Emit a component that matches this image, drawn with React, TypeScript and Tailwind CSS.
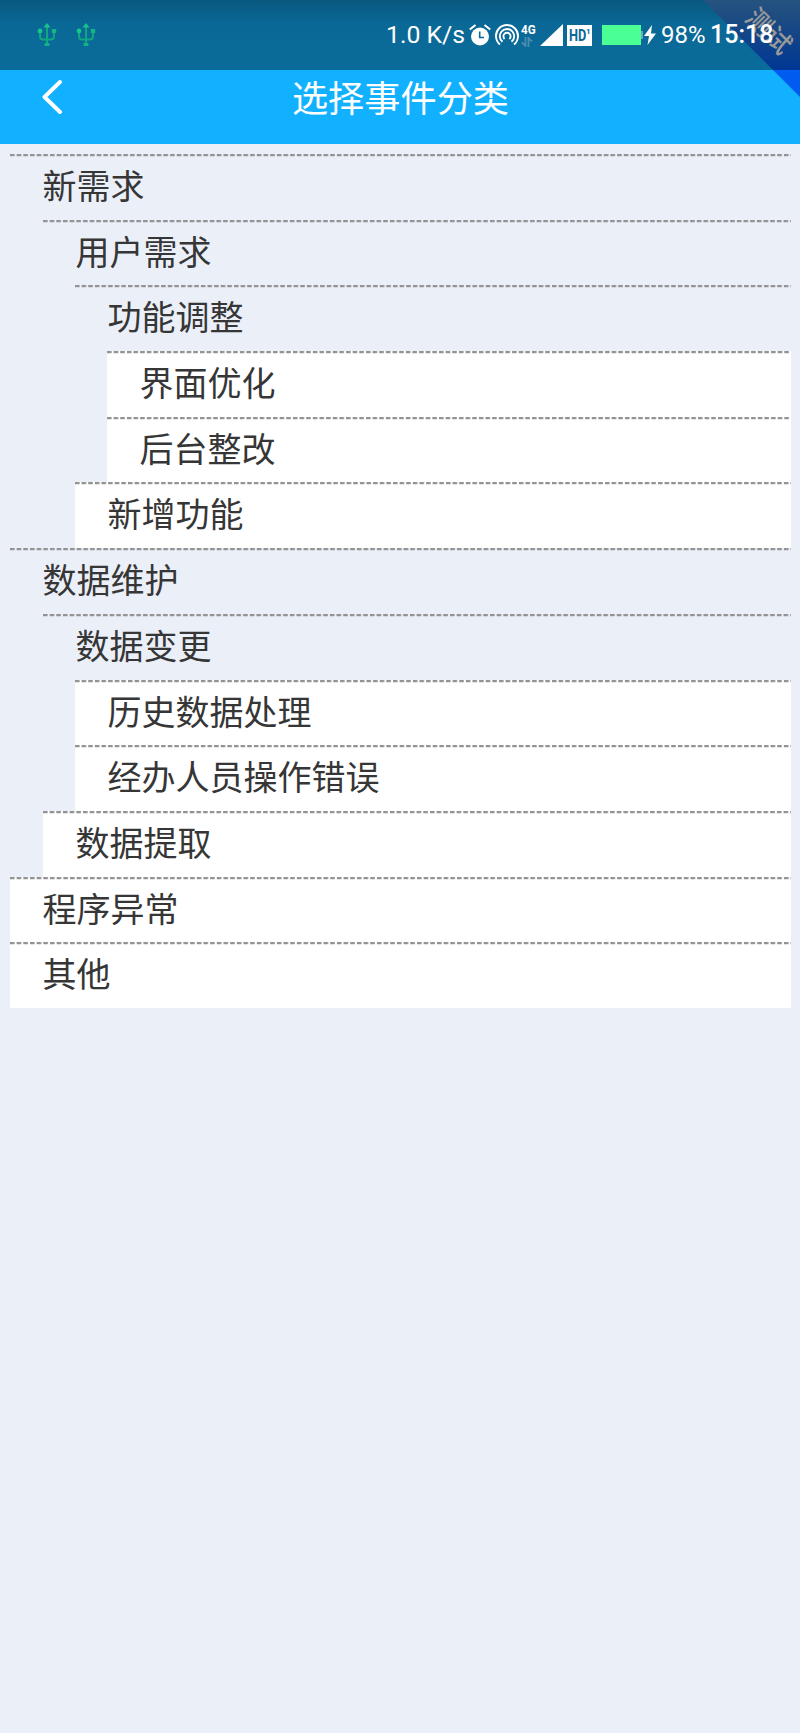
import { clsx } from 'clsx';

type Category = {
  name: string;
  level: 0 | 1 | 2 | 3;
  leaf?: boolean;
};

const CATEGORIES: Category[] = [
  { name: '新需求', level: 0 },
  { name: '用户需求', level: 1 },
  { name: '功能调整', level: 2 },
  { name: '界面优化', level: 3, leaf: true },
  { name: '后台整改', level: 3, leaf: true },
  { name: '新增功能', level: 2, leaf: true },
  { name: '数据维护', level: 0 },
  { name: '数据变更', level: 1 },
  { name: '历史数据处理', level: 2, leaf: true },
  { name: '经办人员操作错误', level: 2, leaf: true },
  { name: '数据提取', level: 1, leaf: true },
  { name: '程序异常', level: 0, leaf: true },
  { name: '其他', level: 0, leaf: true },
];

const INDENT = ['ml-0', 'ml-[33px]', 'ml-[65px]', 'ml-[97px]'];

const UsbIcon = () => (
  <svg viewBox="0 0 20 24" className="h-6 w-5" fill="none" stroke="#0fa880" strokeWidth="2">
    <path d="M10 3v18M3 8v5q0 3.500 3 3.500h8q3 0 3-3.500V8" />
    <path d="M10 0l3.500 4.500h-7z" fill="#17c489" stroke="none" />
    <circle cx="3" cy="8" r="2.400" fill="#17c489" stroke="none" />
    <path d="M14.800 6h4.400v4h-4.400zM7.600 20h4.800v3H7.600z" fill="#12b384" stroke="none" />
  </svg>
);

const AlarmIcon = () => (
  <svg viewBox="0 0 22 22" className="h-[22px] w-[22px]" fill="none">
    <circle cx="11" cy="12.500" r="9" fill="#fff" />
    <path d="M.8 5.500L6.500 1M21.200 5.500L15.500 1" stroke="#fff" strokeWidth="2.200" />
    <path d="M10.700 7.500v6H15" stroke="#0a6896" strokeWidth="1.600" />
  </svg>
);

const HotspotIcon = () => (
  <svg viewBox="0 0 24 22" className="h-[22px] w-6" fill="none" stroke="#fff" strokeWidth="1.900">
    <path d="M5 20.500a11 11 0 1 1 14 0" />
    <path d="M7.500 17.800a7.200 7.200 0 1 1 9 0" />
    <path d="M9.600 15a3.600 3.600 0 1 1 4.800 0" />
  </svg>
);

const NetworkIcon = () => (
  <div className="flex h-[24px] w-[15px] flex-col">
    <span className="origin-left scale-x-90 text-[13px] leading-[13px] font-bold">4G</span>
    <svg viewBox="0 0 12 10" className="mt-px h-[10px] w-3" fill="none" stroke="#4a8fb2" strokeWidth="1.800">
      <path d="M4.500 0v9L1 5.500M7.500 10V1L11 4.500" />
    </svg>
  </div>
);

const SignalIcon = () => (
  <svg viewBox="0 0 23 22" className="h-[22px] w-[23px]">
    <path d="M0 22L23 0v22z" fill="#fff" />
  </svg>
);

const HdBadge = () => (
  <div className="flex h-[21px] w-[25px] bg-white pl-[2px] text-[#0a6896]">
    <span className="w-[17px] origin-left scale-x-[0.75] text-[17px] leading-[21px] font-bold">HD</span>
    <span className="text-[8px] leading-[14px] font-bold">1</span>
  </div>
);

const Battery = () => (
  <div className="flex items-center">
    <div className="h-[20px] w-[39px] bg-[#4aff93]" />
    <div className="h-[8px] w-[2px] bg-[#6fa6bf]" />
    <svg viewBox="0 0 12 20" className="ml-px h-5 w-3">
      <path d="M8 0L0 11h5L3.500 20 12 8.500H7z" fill="#fff" />
    </svg>
  </div>
);

const StatusBar = () => (
  <div className="flex h-[70px] items-center bg-linear-to-b from-[#08587f] via-[#0a6896] via-35% to-[#0a6c9b] pr-[27px] pl-[37px] font-[Roboto] leading-[32px] text-white">
    <div className="flex gap-[19px]">
      <UsbIcon />
      <UsbIcon />
    </div>
    <div className="ml-auto flex items-center">
      <span className="w-[83px] text-[24.800px] whitespace-nowrap">1.0 K/s</span>
      <AlarmIcon />
      <div className="ml-1 flex items-center gap-[2px]">
        <HotspotIcon />
        <NetworkIcon />
      </div>
      <div className="ml-1 flex items-center gap-1">
        <SignalIcon />
        <HdBadge />
      </div>
      <div className="ml-[10px]">
        <Battery />
      </div>
      <span className="ml-[5px] w-[49px] text-[24px]">98%</span>
      <span className="relative z-20 w-[63px] text-[25px] font-medium">15:18</span>
    </div>
  </div>
);

const Header = () => (
  <div className="grid h-[73.500px] grid-cols-[1fr_auto_1fr] items-start bg-[#11b1ff] px-[42px]">
    <svg viewBox="0 0 20 34" className="mt-[10px] h-[34px] w-5" fill="none" stroke="#fff" strokeWidth="3.900" strokeLinecap="round" strokeLinejoin="round">
      <path d="M18 2L2.500 17 18 32" />
    </svg>
    <h1 className="pl-px text-[36.200px] leading-[53px] text-white">选择事件分类</h1>
  </div>
);

// Corner ribbon that marks a test build
const TestRibbon = () => (
  <div className="absolute top-0 right-0 z-10 h-[97px] w-[97px]">
    <div className="h-full bg-[linear-gradient(180deg,#26537f_0,#174784_28px,#003795_70px,#005bf0_70px)] [clip-path:polygon(0_0,100%_0,100%_100%)]" />
    <span className="absolute top-[15px] left-[41px] w-[52px] rotate-45 text-center text-[26px] leading-[30px] font-medium text-[#999]">
      测试
    </span>
  </div>
);

const Row = ({ name, level, leaf }: Category) => (
  <div className={clsx('h-[65.690px]', INDENT[level], leaf && 'bg-white')}>
    <div className="h-[3px] bg-[linear-gradient(90deg,#939393_63%,transparent_68%),linear-gradient(90deg,#97979740_63%,transparent_68%)] bg-[length:6.670px_2px,6.670px_3px] [background-repeat:round_no-repeat]" />
    <div className="pl-[32.500px] text-[34px] leading-[56px] text-[#363636]">{name}</div>
  </div>
);

export default function App() {
  return (
    <div className="relative h-[1733px] w-[800px] overflow-hidden bg-[#ebeff8] font-['Noto_Sans_CJK_SC',sans-serif]">
      <StatusBar />
      <Header />
      <TestRibbon />
      <div className="mt-[10.500px] mr-[9px] ml-[10px]">
        {CATEGORIES.map((item) => (
          <Row key={item.name} {...item} />
        ))}
      </div>
    </div>
  );
}
